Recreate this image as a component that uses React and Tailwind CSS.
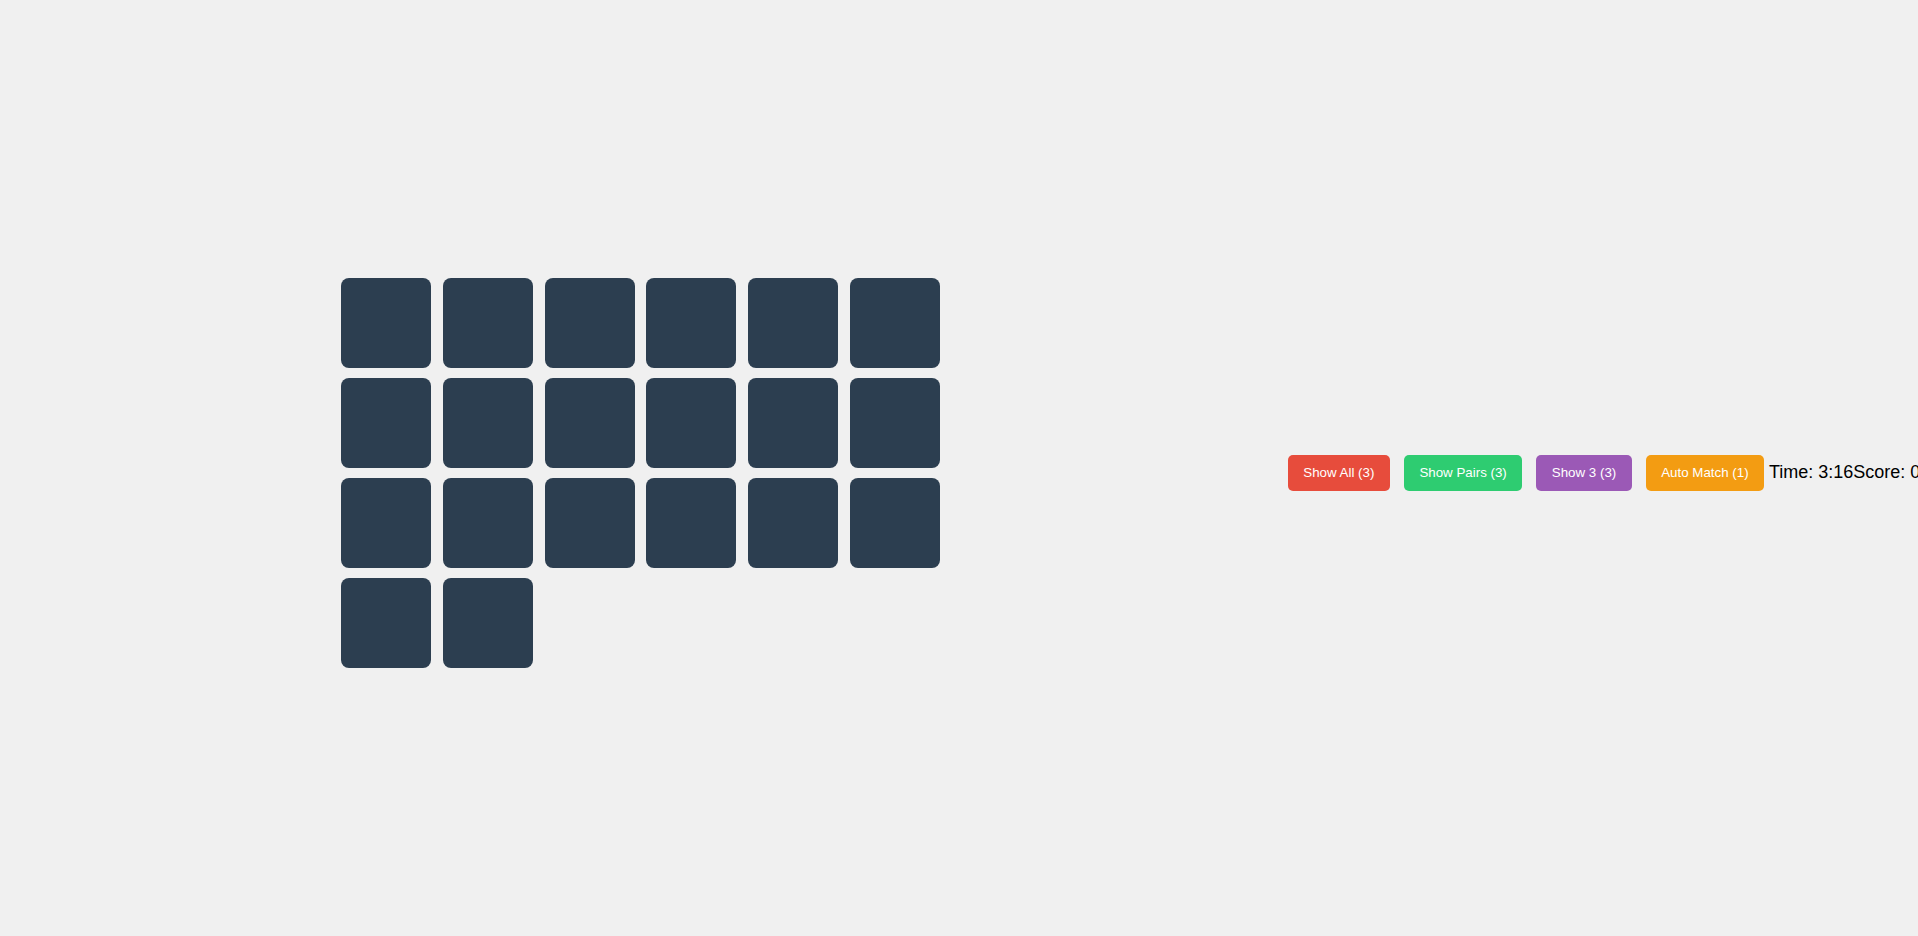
import { useState } from 'react';

const buttons = [
    { label: 'Show All (3)', className: 'bg-[#e74c3c]' },
    { label: 'Show Pairs (3)', className: 'bg-[#2ecc71]' },
    { label: 'Show 3 (3)', className: 'bg-[#9b59b6]' },
    { label: 'Auto Match (1)', className: 'bg-[#f39c12]' },
];

export default function App() {
    const [cards] = useState(Array.from({ length: 20 }, (_, i) => i));

    return (
        <div className="flex h-screen w-full items-center overflow-hidden bg-[#f0f0f0] pl-[341px] pt-[10px] font-['Liberation_Sans',Arial,sans-serif]">
            <div className="grid shrink-0 grid-cols-[repeat(6,90px)] gap-x-[11.8px] gap-y-[10px]">
                {cards.map((c) => (
                    <div key={c} className="h-[90px] w-[90px] cursor-pointer rounded-[8px] bg-[#2c3e50]" />
                ))}
            </div>

            <div className="ml-[343px] flex shrink-0 items-center whitespace-nowrap">
                <div className="flex items-center gap-[4.4px]">
                    {buttons.map((b) => (
                        <button
                            key={b.label}
                            className={`${b.className} mx-[5px] cursor-pointer rounded-[5px] px-[15.3px] py-[10px] text-[13.333px] leading-[15.3px] text-white`}
                        >
                            {b.label}
                        </button>
                    ))}
                </div>
                <span className="text-[18px] text-black">Time: 3:16</span>
                <span className="text-[18px] text-black">Score: 0</span>
            </div>
        </div>
    );
}
